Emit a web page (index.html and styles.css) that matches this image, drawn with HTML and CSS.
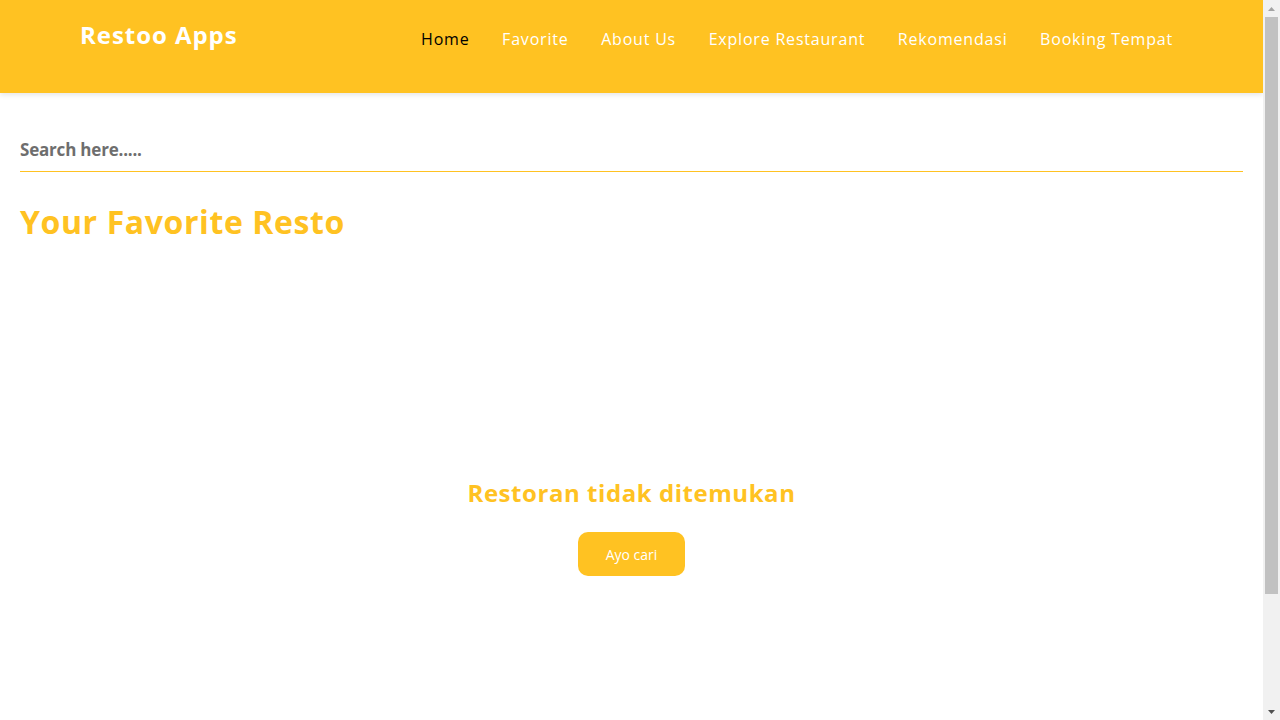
FILE: index.html
```html
<!DOCTYPE html>
<html lang="id">
<head>
<meta charset="utf-8">
<title>Restoo Apps</title>
<link rel="stylesheet" href="styles.css">
</head>
<body>
<div class="page">
  <header class="app-bar">
    <a class="brand" href="#">Restoo Apps</a>
    <nav class="nav">
      <a class="nav-link active" href="#">Home</a>
      <a class="nav-link" href="#">Favorite</a>
      <a class="nav-link" href="#">About Us</a>
      <a class="nav-link" href="#">Explore Restaurant</a>
      <a class="nav-link" href="#">Rekomendasi</a>
      <a class="nav-link" href="#">Booking Tempat</a>
    </nav>
  </header>
  <main class="content">
    <input class="search" type="text" placeholder="Search here.....">
    <h2 class="section-title">Your Favorite Resto</h2>
    <section class="empty">
      <h3 class="empty-title">Restoran tidak ditemukan</h3>
      <button class="btn">Ayo cari</button>
    </section>
  </main>
</div>
<aside class="scrollbar" aria-hidden="true">
  <div class="sb-btn">
    <svg width="7" height="4" viewBox="0 0 7 4"><path d="M3.5 0 L7 4 L0 4 Z" fill="#a3a3a3"/></svg>
  </div>
  <div class="sb-track"><div class="sb-thumb"></div></div>
  <div class="sb-btn">
    <svg width="7" height="4" viewBox="0 0 7 4"><path d="M0 0 L7 0 L3.5 4 Z" fill="#505050"/></svg>
  </div>
</aside>
</body>
</html>
```
FILE: styles.css
```css
* { box-sizing: border-box; }
html, body { margin: 0; padding: 0; }
body {
  font-family: "Open Sans", "Noto Sans", sans-serif;
  background: #ffffff;
  color: #333;
  display: flex;
  align-items: flex-start;
}
.page {
  flex: 1;
  min-width: 0;
}
.app-bar {
  height: 93px;
  background: #ffc222;
  display: flex;
  justify-content: space-between;
  align-items: flex-start;
  padding: 0 90px 0 80px;
  box-shadow: 0 2px 5px rgba(0, 0, 0, 0.1);
  position: relative;
}
.brand {
  margin-top: 18px;
  font-size: 24px;
  font-weight: 700;
  letter-spacing: 0.95px;
  color: #ffffff;
  text-decoration: none;
}
.nav {
  display: flex;
  gap: 32.6px;
  margin-top: 28px;
  margin-left: auto;
}
.nav-link {
  font-size: 16px;
  font-weight: 500;
  letter-spacing: 0.8px;
  color: #ffffff;
  text-decoration: none;
}
.nav-link.active { color: #000000; }
.content {
  padding: 0 20px;
}
.search {
  display: block;
  width: 100%;
  height: 45px;
  margin-top: 34px;
  padding: 0;
  border: none;
  border-bottom: 1px solid #ffc222;
  outline: none;
  font-family: "Open Sans", sans-serif;
  font-size: 17px;
  font-weight: 700;
  letter-spacing: -0.2px;
  color: #6e6e6e;
  background: transparent;
}
.search::placeholder { color: #6e6e6e; opacity: 1; }
.section-title {
  margin: 28px 0 0;
  font-size: 32px;
  font-weight: 700;
  letter-spacing: 0.6px;
  color: #ffc222;
}
.empty {
  display: flex;
  flex-direction: column;
  align-items: center;
  padding-top: 233px;
}
.empty-title {
  margin: 0;
  font-size: 24px;
  font-weight: 700;
  letter-spacing: 0.55px;
  color: #ffc222;
}
.btn {
  margin-top: 23px;
  height: 44px;
  width: 107px;
  border: none;
  border-radius: 10px;
  background: #ffc222;
  color: #ffffff;
  font-family: "Open Sans", sans-serif;
  font-size: 14px;
  font-weight: 400;
  cursor: pointer;
}
.scrollbar {
  flex: 0 0 17px;
  width: 17px;
  height: 100vh;
  position: sticky;
  top: 0;
  background: #f1f1f1;
  display: flex;
  flex-direction: column;
}
.sb-btn {
  height: 17px;
  display: flex;
  align-items: center;
  justify-content: center;
}
.sb-track {
  flex: 1;
  padding: 0 2px;
}
.sb-thumb {
  height: 577px;
  background: #c1c1c1;
}
```
